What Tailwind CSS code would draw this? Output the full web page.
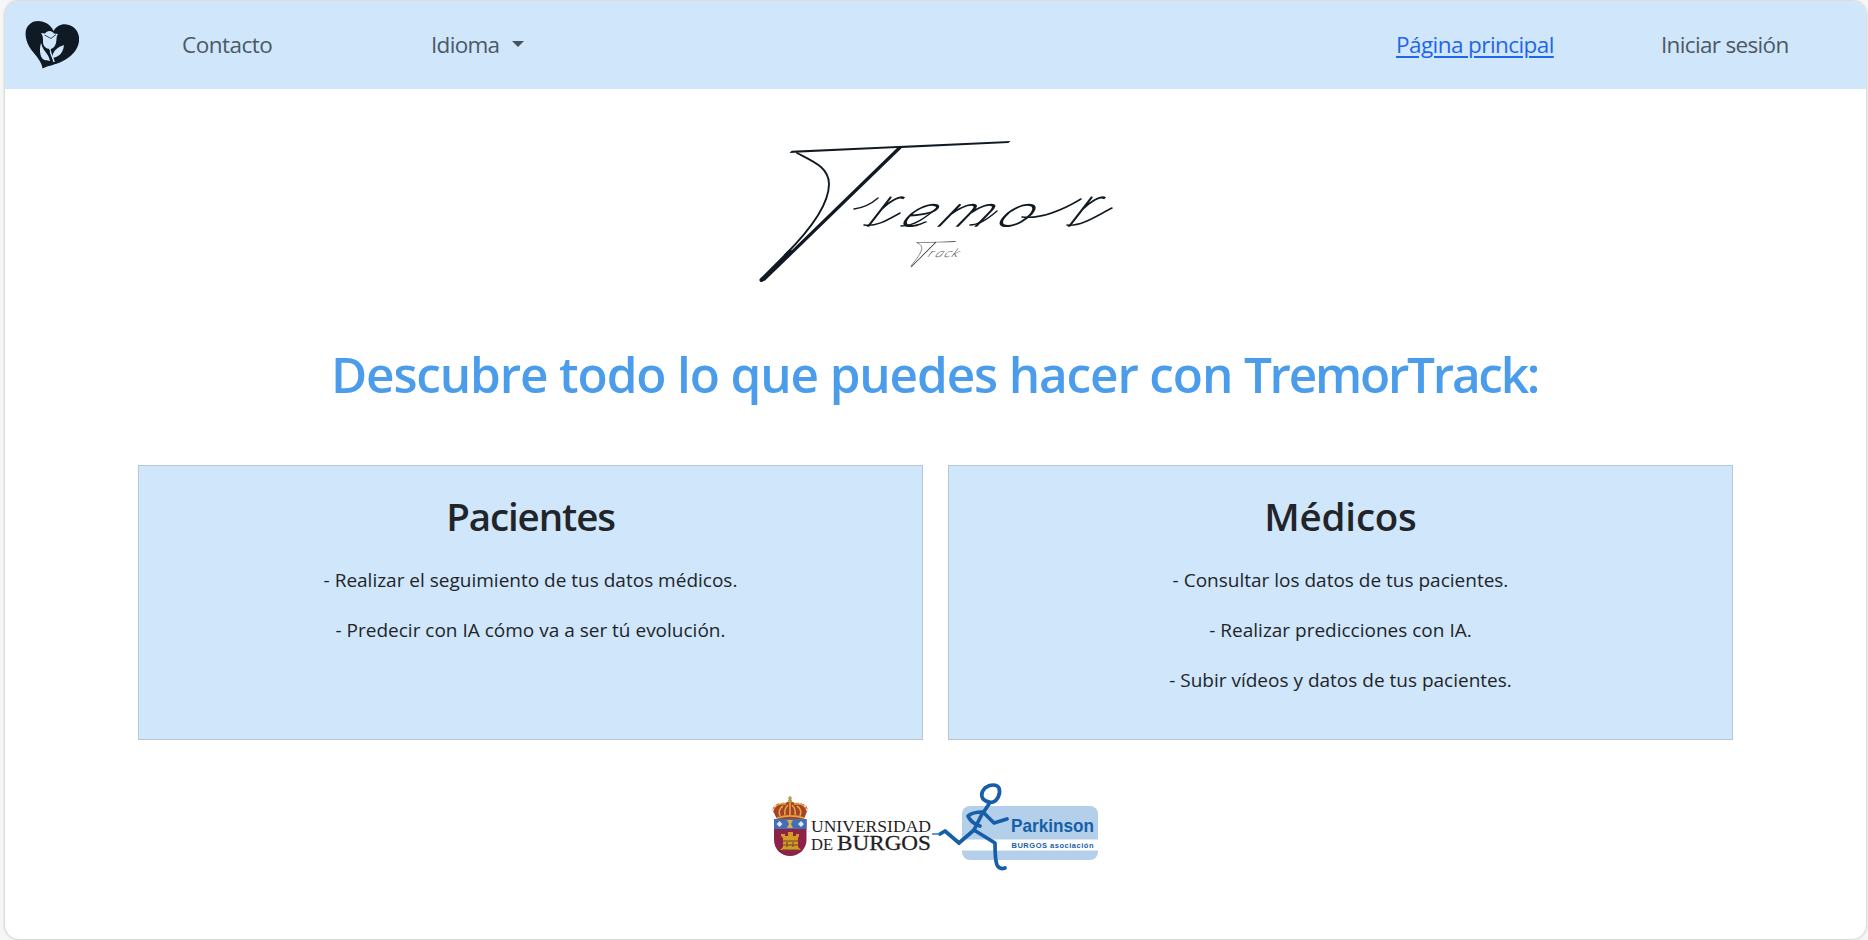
<!DOCTYPE html>
<html lang="es">
<head>
<meta charset="utf-8">
<title>TremorTrack</title>
<script src="https://cdn.jsdelivr.net/npm/@tailwindcss/browser@4"></script>
</head>
<body class="bg-[#f6f6f6] font-['Open_Sans',sans-serif] text-[#212529] h-[940px] overflow-hidden">
<div class="ml-[5px] mt-px w-[1861px] h-[938px] bg-white rounded-[14px] overflow-hidden shadow-[0_0_3px_rgba(0,0,0,0.3)] flex flex-col items-center">
  <header class="w-full h-[88px] shrink-0 bg-[#d0e6fb] flex items-center text-[22.5px] leading-[30px] text-[#4b5966] whitespace-nowrap">
    <svg class="ml-[20px] w-[54px] h-[50px] shrink-0" viewBox="25 20 54 50">
      <path fill="#0f1a24" d="M42.500 68.500 C42 63 38 58 33 52 C27 45 24.500 36 26 30 C28 23 35 19.500 42 21.500 C48 23 52 27 53.500 31 C57 25 63 23 69 25 C76 27 80 34 79 41.500 C78 50 71 57 62 61.500 C55 65 47 66 42.500 68.500Z"/>
      <g fill="#d0e6fb">
        <path d="M41 33 L45 33.500 C47 30 52 30 54 33.500 L58 34 C56 36 57 41 55.500 44.500 C54 48 52 49 50 49 C46 49 43 46 43 42 C43 38 43 35.500 41 33Z"/>
        <path d="M41 43 C39.500 48 39.500 54 42 58 C44 61 47 60 50 61 C49 55 45 52 43.500 49 C42 47 42 45 41 43Z"/>
        <path d="M64 45 C57 47 52 52 52.500 58 C57 57 63 55 64 45Z"/>
      </g>
      <path fill="none" stroke="#d0e6fb" stroke-width="1.500" d="M50 48 C49 53 53 56 54 62"/>
      <path fill="none" stroke="#0f1a24" stroke-width="0.800" d="M44.500 35 L51 38.500 L56 34.500 M49.500 50 C49 54 51 57 52 60"/>
    </svg>
    <a class="ml-[103px] w-[92px] tracking-[-0.5px]">Contacto</a>
    <a class="ml-[157px] w-[69px] tracking-[-0.7px]">Idioma</a>
    <svg class="ml-[12px] mb-[2px] w-[12px] h-[6px]" viewBox="0 0 12 6"><path d="M0 0H12L6 6Z" fill="#46535f"/></svg>
    <a class="ml-[872px] w-[160px] tracking-[-0.57px] text-[#1f66ea] underline decoration-[1.500px] underline-offset-[3px]">Página principal</a>
    <a class="ml-[105px] tracking-[-0.66px]">Iniciar sesión</a>
  </header>

  <svg class="mt-[31px] w-[390px] h-[180px] shrink-0 overflow-visible" viewBox="740 120 390 180" role="img" aria-label="Tremor Track">
    <g fill="#111a22" stroke="#111a22" font-family="Lato, sans-serif">
      <text transform="matrix(2.100 -0.095 -1.030 1 761 281)" text-anchor="middle" font-size="193" font-weight="100" stroke="none">T</text>
      <path fill="none" stroke-width="1.900" stroke-linecap="round" d="M796 153 C811 161 828 167 828 184 C828 208 800 239 784 255"/>
      <path fill="none" stroke-width="4" stroke-linecap="round" d="M789 251.500 L760.500 280"/>
      <g font-style="italic" font-weight="100">
        <text transform="matrix(1.100 0 -0.640 1 864 226)" font-size="58" stroke-width="1.700">r</text>
        <text transform="matrix(1.450 0 -0.800 1 897 226)" x="0 26 66" font-size="43" stroke-width="1.600">emo</text>
        <text transform="matrix(1.100 0 -0.640 1 1065 226)" font-size="58" stroke-width="1.700">r</text>
      </g>
      <g fill="none" stroke-width="1.500" stroke-linecap="round">
        <path d="M853 209 C861 208 869 205 877 198"/>
        <path d="M863 225 C876 227 888 219 899 213"/>
        <path d="M900 226 C914 226 925 217 936 208"/>
        <path d="M969 225 C979 225 988 218 996 211"/>
        <path d="M1021 217 C1039 219 1060 211 1080 199"/>
        <path d="M1066 225 C1080 227 1097 215 1111 208"/>
      </g>
      <text transform="matrix(2 -0.040 -1 1 910 267)" text-anchor="middle" font-size="36" font-weight="100" stroke-width="0.100">T</text>
      <path fill="none" stroke-width="0.500" d="M916 243 C924 246 922 251 910 266"/>
      <text transform="matrix(1.250 0 -0.600 1 926 257)" x="0 6 13 19" font-size="12" font-style="italic" font-weight="100" stroke-width="0.200">rack</text>
    </g>
  </svg>

  <h1 class="mt-[39px] mr-[2px] text-[49.5px] leading-[70px] font-semibold text-[#4b9deb] tracking-[-1.14px] whitespace-nowrap">Descubre todo lo que puedes hacer con <span class="tracking-[-2.25px]">TremorTrack:</span></h1>

  <main class="mt-[56px] w-[1595px] grid grid-cols-2 gap-[25px] text-center">
    <section class="h-[275px] bg-[#d0e6fb] border border-[#b9c7d4] pt-[26px]">
      <h2 class="text-[38.5px] leading-[48px] font-semibold tracking-[-1.100px]">Pacientes</h2>
      <p class="mt-[25px] text-[19px] leading-[30px]">- Realizar el seguimiento de tus datos médicos.</p>
      <p class="mt-[20px] text-[19px] leading-[30px]">- Predecir con IA cómo va a ser tú evolución.</p>
    </section>
    <section class="h-[275px] bg-[#d0e6fb] border border-[#b9c7d4] pt-[26px]">
      <h2 class="text-[38.5px] leading-[48px] font-semibold tracking-[-0.2px]">Médicos</h2>
      <p class="mt-[25px] text-[19px] leading-[30px]">- Consultar los datos de tus pacientes.</p>
      <p class="mt-[20px] text-[19px] leading-[30px]">- Realizar predicciones con IA.</p>
      <p class="mt-[20px] text-[19px] leading-[30px]">- Subir vídeos y datos de tus pacientes.</p>
    </section>
  </main>

  <footer class="mt-[40px] mr-px flex">
    <svg class="w-[162px] h-[100px] overflow-visible" viewBox="770 780 162 100">
      <path d="M774 819H806.500V840C806.500 849 799 856 790 856C781 856 774 849 774 840Z" fill="#8d2148"/>
      <path d="M774 819H806.500V829H774Z" fill="#416fb2"/>
      <path d="M777 819 L772.500 810 C773 805 779 802 785 803 L790 801 L795 803 C801 802 808 805 807.500 810 L804 819Z" fill="#a8412b"/>
      <path d="M777 818 C785 815.500 796 815.500 804 818 M773 810 C775 805 780 803 786 804 M807 810 C805 805 800 803 794 804 M780 816 C778 811 780 808 783 806 M800 816 C802 811 800 808 797 806 M790 802V816 M785 815 C784 810 786 807 788 805 M795 815 C796 810 794 807 792 805" fill="none" stroke="#dfa93b" stroke-width="1.600"/>
      <circle cx="790" cy="801" r="2" fill="#c29a32"/><path d="M790 796V800M788 798H792" stroke="#997a36"/>
      <g fill="#f6e7c9"><circle cx="775" cy="806" r="1"/><circle cx="780" cy="803" r="1"/><circle cx="800" cy="803" r="1"/><circle cx="805" cy="806" r="1"/><circle cx="773" cy="810" r="1"/><circle cx="807" cy="810" r="1"/></g>
      <path d="M776.500 824l3-3 3 3-3 3zM798 824l3-3 3 3-3 3z" fill="#d8e6f7"/>
      <path d="M787 820h6l-2 4 2 4h-6l2-4z" fill="#d7ae55"/>
      <path d="M783 847V838L781 836V834H785V836H788V832H793V836H796V834H799V836L798 838V847L801 850H780Z" fill="#d49a26"/>
      <path d="M782 841H799M782 845H799M787 847V842M793 847V842M782 850H799" stroke="#6e4428" stroke-width="1"/>
      <g fill="#1f1f1f" font-family="'Liberation Serif', serif">
        <text x="811" y="832" font-size="17.500" textLength="120" lengthAdjust="spacingAndGlyphs">UNIVERSIDAD</text>
        <text x="811" y="849.500" font-size="17.500" textLength="22" lengthAdjust="spacingAndGlyphs">DE</text>
        <text x="837" y="849.500" font-size="21" stroke="#1f1f1f" stroke-width="0.300" textLength="94" lengthAdjust="spacingAndGlyphs">BURGOS</text>
      </g>
    </svg>
    <svg class="w-[168px] h-[100px]" viewBox="932 780 168 100">
      <rect x="962" y="806" width="136" height="54" rx="8" fill="#b4cfea"/>
      <path d="M962 839.500H1098V850.500H962Z" fill="#fff"/>
      <g fill="none" stroke="#165fa8" stroke-width="3.700" stroke-linecap="round" stroke-linejoin="round">
        <path d="M986 801 C980 798 981 792 985 788 C990 784 997 784 999 788 C1001 794 997 801 993 802 C990 803 988 802 986 801Z"/>
        <path d="M989 804 L983 813 M983 812 L974 830 L959 843 L945 831 L940 834"/>
        <path d="M983 812 C976 812 970 814 968 816 C970 821 974 824 980 826"/>
        <path d="M983 812 L994 823 L1007 819"/>
        <path d="M974 830 L995 843 C995 852 995 860 997 865 C999 869 1002 869 1005 868"/>
      </g>
      <path d="M932 834H940" stroke="#2d78c5" stroke-width="1.500"/>
      <g fill="#165fa8" font-family="'Liberation Sans', sans-serif" font-weight="700">
        <text x="1011" y="832" font-size="18.500" textLength="83" lengthAdjust="spacingAndGlyphs">Parkinson</text>
        <text x="1011.500" y="848.300" font-size="7.500" textLength="82">BURGOS asociación</text>
      </g>
    </svg>
  </footer>
</div>
</body>
</html>
